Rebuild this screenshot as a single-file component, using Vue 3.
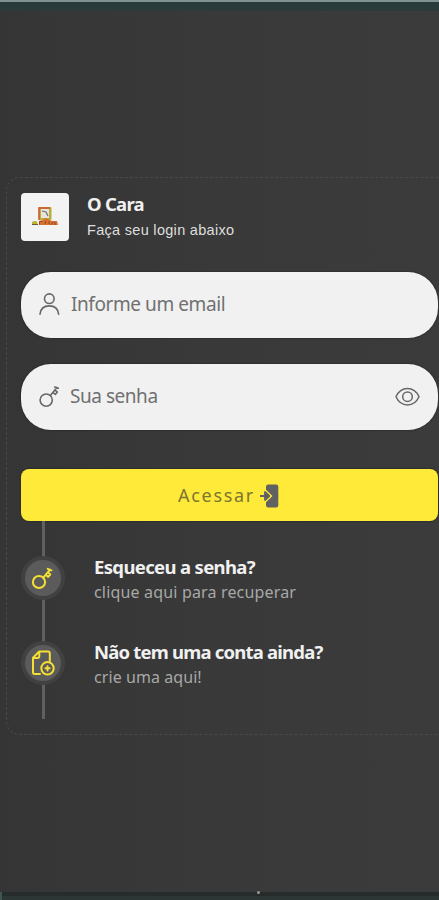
<script setup>
import { ref } from 'vue'
const email = ref('')
const password = ref('')
const visible = ref(false)
</script>

<template>
  <div class="screen">
    <header class="top-edge"></header>
    <main class="card">
      <div class="brand">
        <div class="logo">
          <svg width="28" height="20" viewBox="0 0 28 20">
            <rect x="7.500" y="0" width="13" height="13" rx="1" fill="#b8b03c" />
            <path d="M8 13V1H19" fill="none" stroke="#d2512f" stroke-width="1.4" />
            <rect x="10" y="2" width="8" height="9" fill="#e5e4df" />
            <path d="M11 4l4 1 2 4" stroke="#77716d" stroke-width="1.2" fill="none" />
            <path d="M8 18v-4l4-1 2-2 3 1 2 1 2 1h5l1 4z" fill="#d9702e" />
            <path d="M8.500 17.500v-3h3M15 14l-1 3M18 14v3M22 15l-2 3M24 15v3" fill="none" stroke="#8d4930" stroke-width="1" />
            <ellipse cx="3.700" cy="16" rx="2.800" ry="2" fill="#bdb332" />
            <path d="M1 17.500h6" stroke="#665d40" stroke-width="1" />
          </svg>
        </div>
        <div class="brand-text">
          <h1>O Cara</h1>
          <p>Faça seu login abaixo</p>
        </div>
      </div>

      <label class="field">
        <svg width="22" height="24" viewBox="0 0 22 24">
          <circle cx="10.300" cy="5.700" r="4.800" />
          <path d="M1 21.200C1.500 15.800 5.300 12.900 10.300 12.900s8.800 2.900 9.300 8.300" />
        </svg>
        <input v-model="email" class="mail" type="email" placeholder="Informe um email" />
      </label>

      <label class="field second">
        <svg width="22" height="24" viewBox="0 0 22 24">
          <circle cx="7.200" cy="15.100" r="6.100" />
          <path d="M11.400 10.600L17.800 2.500M14.100 7.600l2.300 1.800 1.900-2.300-2.100-1.900M15.700 2.100l3.600 1.200" />
        </svg>
        <input v-model="password" :type="visible ? 'text' : 'password'" placeholder="Sua senha" />
        <svg class="eye" width="26" height="20" viewBox="0 0 26 20" @click="visible = !visible">
          <path d="M2 9.700C4.500 4.200 8.500 1.500 13.500 1.500S22.500 4.200 25 9.700C22.500 15.200 18.500 17.900 13.500 17.900S4.500 15.200 2 9.700z" />
          <circle cx="13.500" cy="9.700" r="4.800" />
        </svg>
      </label>

      <button class="submit">
        <span>Acessar</span>
        <svg width="20" height="24" viewBox="0 0 20 24">
          <path d="M9 .5h8q2.300 0 2.300 2.300v18.400q0 2.300-2.300 2.300H9.300q-2.300 0-2.300-2.300v-3l6.500-6.200L7 5.800V2.800Q7 .5 9.300.5z" fill="#616161" />
          <path d="M1 12h6M6 8l4.300 4L6 16z" fill="#616161" stroke="#616161" stroke-width="1.800" stroke-linejoin="round" />
        </svg>
      </button>

      <nav class="timeline">
        <a class="step">
          <span class="dot">
            <svg width="24" height="24" viewBox="0 0 24 24">
              <circle cx="8" cy="16" r="6.100" />
              <path d="M12.300 11.700L19.100 3.700M15 9l2.200 1.900 2.100-2.500-2-1.900M16.700 2.900l3.700 1.500" />
            </svg>
          </span>
          <span class="step-text">
            <strong class="forgot">Esqueceu a senha?</strong>
            <small class="recover">clique aqui para recuperar</small>
          </span>
        </a>
        <a class="step">
          <span class="dot">
            <svg width="24" height="26" viewBox="0 0 24 26">
              <path d="M18.800 11V3.200Q18.800 1.500 17 1.500H8.200L2 7.700V22.300Q2 24 3.700 24H9M8.300 1.800V6Q8.300 8 6.300 8H2.300" />
              <circle cx="16.500" cy="18.300" r="6.200" />
              <path d="M16.500 16.200v4.200M14.400 18.300h4.200" />
            </svg>
          </span>
          <span class="step-text">
            <strong class="account">Não tem uma conta ainda?</strong>
            <small class="create">crie uma aqui!</small>
          </span>
        </a>
      </nav>
    </main>
    <footer class="bottom-edge"><i></i></footer>
  </div>
</template>

<style>
body { margin: 0; overflow: hidden; }
</style>

<style scoped>
* { box-sizing: border-box; }
.screen {
  width: 439px;
  height: 900px;
  overflow: hidden;
  display: flex;
  flex-direction: column;
  background: linear-gradient(90deg, #353535, #383938 45%, #3b3b3b);
  font-family: "Noto Sans", sans-serif;
}
.top-edge {
  flex: none;
  height: 11px;
  border-top: 2px solid #809290;
  background: linear-gradient(#293b3e, #2d3b39);
}
.bottom-edge {
  flex: none;
  height: 8px;
  margin-top: auto;
  display: flex;
  background: linear-gradient(#262b2b 0 4px, #2c3635 4px);
  border-left: 2px solid #405651;
}
.bottom-edge i {
  width: 3px;
  height: 3px;
  margin: -1px 0 0 255px;
  border-radius: 50%;
  background: #999;
}
.card {
  flex: none;
  width: 448px;
  height: 558px;
  margin: 166px 0 0 6px;
  padding: 15px 15px 0 14px;
  border: 1px dashed #484949;
  border-radius: 14px;
}
.brand { display: flex; height: 48px; gap: 18px; }
.logo {
  width: 48px;
  height: 48px;
  display: grid;
  place-items: center;
  border-radius: 4px;
  background: #f3f3f3;
}
.brand-text { display: flex; flex-direction: column; }
h1, p { margin: 0; white-space: nowrap; }
h1 { font-size: 18.500px; line-height: 21px; font-weight: 700; letter-spacing: -.75px; color: #f0f0f0; }
p { margin-top: 7px; font: 14.500px/18px "Liberation Sans", sans-serif; letter-spacing: .3px; color: #dedede; }
.field {
  height: 66px;
  margin-top: 31px;
  padding: 0 18px;
  display: flex;
  align-items: center;
  border-radius: 30px;
  background: #f1f1f1;
  box-shadow: 0 0 2px #1c1c1c;
}
.field.second { margin-top: 26px; }
.field svg { flex: none; fill: none; stroke: #686868; stroke-width: 1.600; stroke-linejoin: round; stroke-linecap: round; }
.field .eye { stroke-width: 1.500; }
.field input {
  min-width: 0;
  flex: 1;
  height: 30px;
  margin: 0 0 3px 9px;
  padding: 0;
  border: 0;
  outline: 0;
  background: none;
  color: #666;
  font: 19px/30px "Noto Sans", sans-serif;
  letter-spacing: -.46px;
}
.field .mail { margin-left: 10px; letter-spacing: -.42px; }
.field input::placeholder { color: #707070; opacity: 1; }
.submit {
  width: 100%;
  height: 52px;
  margin-top: 39px;
  padding: 0 2px 0 0;
  display: flex;
  align-items: center;
  justify-content: center;
  gap: 4px;
  border: 0;
  border-radius: 8px;
  background: #ffea3a;
  box-shadow: 0 0 2px #171717;
  color: #7c752f;
  font: 18px/24px "Noto Sans", sans-serif;
  letter-spacing: 1.700px;
}
.submit svg { margin-top: 2px; }
.timeline {
  height: 198px;
  padding-top: 35px;
  background: linear-gradient(#606060, #606060) 21px 0 / 3px 100% no-repeat;
}
.step { display: flex; height: 85px; gap: 29px; }
.dot {
  width: 44px;
  height: 44px;
  flex: none;
  display: grid;
  place-items: center;
  border: 4px solid #414141;
  border-radius: 50%;
  background: #5b5b5b;
}
.dot svg { fill: none; stroke: #f4df35; stroke-width: 2; stroke-linejoin: round; stroke-linecap: round; }
.step-text { display: flex; flex-direction: column; white-space: nowrap; }
.step-text strong { font-size: 18.500px; line-height: 22px; font-weight: 700; color: #f0f0f0; }
.forgot { letter-spacing: -.65px; }
.account { letter-spacing: -.8px; }
.step-text small { font-size: 16px; line-height: 28px; color: #a8a8a8; }
.recover { letter-spacing: .17px; }
.create { letter-spacing: .07px; }
</style>
